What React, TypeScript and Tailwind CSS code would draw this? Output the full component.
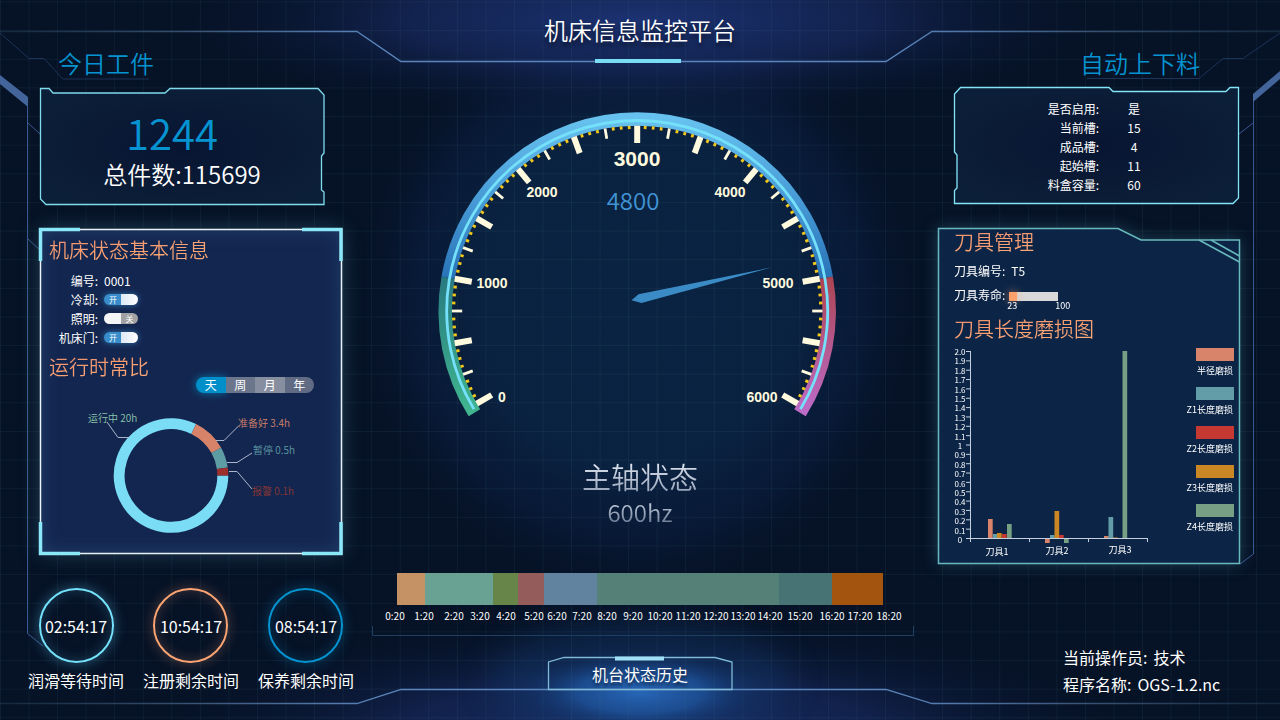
import { useState } from 'react'

const GRID_X = Array.from({ length: 45 }, (_, i) => i * 28.55 + 0.5)
const GRID_Y = Array.from({ length: 26 }, (_, i) => i * 28.63 + 2)

const feeder = [
  { label: '是否启用:', value: '是' },
  { label: '当前槽:', value: '15' },
  { label: '成品槽:', value: '4' },
  { label: '起始槽:', value: '11' },
  { label: '料盒容量:', value: '60' },
]

const timers = [
  { label: '润滑等待时间', time: '02:54:17', ring: 'border-[#74e2fb] shadow-[0_0_14px_rgba(90,200,240,0.4),inset_0_0_14px_rgba(90,200,240,0.22)]' },
  { label: '注册剩余时间', time: '10:54:17', ring: 'border-[#fda473] shadow-[0_0_14px_rgba(253,164,115,0.28),inset_0_0_14px_rgba(253,164,115,0.22)]' },
  { label: '保养剩余时间', time: '08:54:17', ring: 'border-[#0594d1] shadow-[0_0_14px_rgba(5,148,209,0.35),inset_0_0_14px_rgba(5,148,209,0.25)]' },
]

const periods = [
  { label: '天', tone: 'bg-[#667086]' },
  { label: '周', tone: 'bg-[#6b758b]' },
  { label: '月', tone: 'bg-[#868e9f]' },
  { label: '年', tone: 'bg-[#616c84]' },
]

const legend = [
  { label: '半径磨损', color: 'bg-[#d8846a]' },
  { label: 'Z1长度磨损', color: 'bg-[#629da8]' },
  { label: 'Z2长度磨损', color: 'bg-[#c63832]' },
  { label: 'Z3长度磨损', color: 'bg-[#cb8724]' },
  { label: 'Z4长度磨损', color: 'bg-[#779f83]' },
]

const CORAL = '#d8846a'
const TEAL = '#629da8'
const AMBER = '#cb8724'
const RED = '#c63832'
const GREEN = '#779f83'

// x, top, height, colour
const wearBars: [number, number, number, string][] = [
  [988, 519, 20, CORAL], [993, 534, 5, TEAL], [997, 533, 6, AMBER], [1002, 534, 5, RED], [1007, 524, 15, GREEN],
  [1045, 539, 4, CORAL], [1050, 535, 4, TEAL], [1054.5, 511, 28, AMBER], [1059, 535, 4, RED], [1064, 539, 4, GREEN],
  [1104, 536, 3, CORAL], [1108.5, 517, 22, TEAL], [1113, 537.5, 1.5, AMBER], [1118, 538, 1, RED], [1122.5, 351, 188, GREEN],
]

const wearAxis = ['2.0', '1.9', '1.8', '1.7', '1.6', '1.5', '1.4', '1.3', '1.2', '1.1', '1', '0.9', '0.8', '0.7', '0.6', '0.5', '0.4', '0.3', '0.2', '0.1', '0']

const history: [number, number, string][] = [
  [397, 425, '#c59265'], [425, 493, '#69a192'], [493, 518, '#678548'], [518, 544, '#945c5a'],
  [544, 597, '#61839f'], [597, 779, '#548077'], [779, 832, '#477374'], [832, 883, '#a3540f'],
]

const hours: [string, number][] = [
  ['0:20', 395], ['1:20', 424], ['2:20', 454], ['3:20', 480], ['4:20', 506], ['5:20', 534], ['6:20', 557],
  ['7:20', 582], ['8:20', 607], ['9:20', 633], ['10:20', 660], ['11:20', 688], ['12:20', 716],
  ['13:20', 743], ['14:20', 770], ['15:20', 800], ['16:20', 832], ['17:20', 860], ['18:20', 889],
]

const dialNumbers: [string, number, number, string][] = [
  ['0', 502, 402, 'text-sm'], ['1000', 492, 288, 'text-sm'], ['2000', 542, 197, 'text-sm'], ['3000', 637, 166, 'text-[21px]'],
  ['4000', 730, 197, 'text-sm'], ['5000', 778, 288, 'text-sm'], ['6000', 762, 402, 'text-sm'],
]

// angle in degrees, counter-clockwise from east
function polar(cx: number, cy: number, r: number, deg: number) {
  const a = (deg * Math.PI) / 180
  return [cx + r * Math.cos(a), cy - r * Math.sin(a)]
}

function arc(cx: number, cy: number, r: number, from: number, to: number) {
  const [x1, y1] = polar(cx, cy, r, from)
  const [x2, y2] = polar(cx, cy, r, to)
  return `M${x1} ${y1}A${r} ${r} 0 ${from - to > 180 ? 1 : 0} 1 ${x2} ${y2}`
}

function Backdrop() {
  return (
    <svg viewBox="0 0 1280 720" preserveAspectRatio="none" aria-hidden="true" className="absolute inset-0 h-full w-full">
      <defs>
        <radialGradient id="glow-dial">
          <stop offset="0" stopColor="#0a2342" />
          <stop offset="0.55" stopColor="#0a2342" stopOpacity="0.95" />
          <stop offset="0.8" stopColor="#091d3e" stopOpacity="0.6" />
          <stop offset="1" stopColor="#061226" stopOpacity="0" />
        </radialGradient>
        <radialGradient id="glow-edge">
          <stop offset="0" stopColor="#1c3272" />
          <stop offset="0.5" stopColor="#152759" stopOpacity="0.8" />
          <stop offset="1" stopColor="#0a1734" stopOpacity="0" />
        </radialGradient>
        <radialGradient id="glow-button">
          <stop offset="0" stopColor="#2767b8" />
          <stop offset="0.5" stopColor="#1f569f" stopOpacity="0.75" />
          <stop offset="1" stopColor="#0d2a5c" stopOpacity="0" />
        </radialGradient>
        <linearGradient id="edge-line">
          <stop offset="0" stopColor="#33506b" stopOpacity="0.35" />
          <stop offset="0.2" stopColor="#45648c" />
          <stop offset="0.3" stopColor="#5b86bd" />
          <stop offset="0.7" stopColor="#5b86bd" />
          <stop offset="0.8" stopColor="#45648c" />
          <stop offset="1" stopColor="#33506b" stopOpacity="0.35" />
        </linearGradient>
      </defs>
      <ellipse cx="637" cy="300" rx="290" ry="300" fill="url(#glow-dial)" />
      <ellipse cx="640" cy="20" rx="460" ry="95" fill="url(#glow-edge)" />
      <ellipse cx="640" cy="735" rx="480" ry="115" fill="url(#glow-edge)" opacity="0.9" />
      <ellipse cx="640" cy="678" rx="150" ry="60" fill="#16457f" fillOpacity="0.3" filter="blur(16px)" />
      <ellipse cx="640" cy="692" rx="125" ry="42" fill="url(#glow-button)" />
      <g stroke="#4f8c94" strokeOpacity="0.11">
        {GRID_X.map((x) => <line key={x} x1={x} y1="0" x2={x} y2="720" />)}
        {GRID_Y.map((y) => <line key={y} x1="0" y1={y} x2="1280" y2={y} />)}
      </g>
      <g fill="none" stroke="url(#edge-line)" strokeWidth="1.300">
        <path d="M0 31.5H357L401 61.5H886L932 31.5H1280" />
        <path d="M0 703.5H357L401 689.5H886L932 703.5H1280" />
      </g>
      <g fill="none" stroke="#1d3358">
        <path d="M0 33L29 58.500H44L63 79H149" />
        <path d="M1280 33L1243 58.500H1223L1199 78.500H1087" />
      </g>
      <g fill="none" stroke="#3a5890">
        <path d="M27.500 97V633.500L43 646" />
        <path d="M28 123L40 134M28 239L40 250" />
        <path d="M1253.500 94V554L1240 564M1239 134L1253 123" />
      </g>
      <path d="M0 75L28 97V107L0 84ZM1280 71L1253 94V102L1280 79Z" fill="#43659c" />
    </svg>
  )
}

function SectionTitle({ children }: { children: string }) {
  return (
    <h2 className="bg-linear-to-br from-[#f08f6c] via-[#fda574] to-[#ffb478] bg-clip-text text-xl leading-7 font-[350] text-transparent">
      {children}
    </h2>
  )
}

function TodayPanel() {
  return (
    <div className="relative mr-[18px] h-[117px] pt-[19px] text-center">
      <svg viewBox="0 0 284 117" preserveAspectRatio="none" aria-hidden="true" className="absolute inset-0 h-full w-full overflow-visible">
        <defs>
          <radialGradient id="today-fill" r="0.6">
            <stop offset="0" stopColor="#081532" />
            <stop offset="1" stopColor="#0c1f38" />
          </radialGradient>
        </defs>
        <path d="M0.500 0.500H9L13 5H125L130 0.500H278L284 7V65L281.500 68V102L284 104V116.500H6L0.500 111Z" fill="url(#today-fill)" stroke="#7fdcec" strokeWidth="1.300" />
      </svg>
      <p className="relative pr-5 text-[42px] leading-[50px] font-[350] text-[#0594d1]">1244</p>
      <p className="relative text-2xl leading-[34px] font-[350] text-white">总件数:115699</p>
    </div>
  )
}

function Toggle({ name, on }: { name: string; on: boolean }) {
  const [checked, setChecked] = useState(on)
  return (
    <label className={checked ? 'relative block h-[11px] w-[34px] cursor-pointer rounded-full shadow-[0_0_6px_rgba(58,142,205,0.7)]' : 'relative block h-[11px] w-[34px] cursor-pointer rounded-full'}>
      <input type="checkbox" aria-label={name} checked={checked} onChange={(e) => setChecked(e.target.checked)} className="sr-only" />
      <span className="flex h-full overflow-hidden rounded-full text-[8px] leading-[11px] text-white">
        {checked ? (
          <>
            <span className="w-1/2 bg-[#388dca] pl-px text-center">开</span>
            <span className="w-1/2 bg-linear-to-r from-[#dce9f4] to-white" />
          </>
        ) : (
          <>
            <span className="w-1/2 bg-[#f4f5f7]" />
            <span className="w-1/2 bg-[#a2a2a4] text-center">关</span>
          </>
        )}
      </span>
    </label>
  )
}

function PeriodPicker() {
  const [period, setPeriod] = useState('天')
  return (
    <fieldset className="mr-7 ml-auto flex h-4 w-[118px] rounded-full text-xs leading-4 text-white">
      {periods.map((p) => (
        <label
          key={p.label}
          className={`relative flex-1 cursor-pointer text-center first:rounded-l-full last:rounded-r-full ${period === p.label ? 'bg-[#008fc8] shadow-[0_0_8px_rgba(0,150,210,0.7)]' : p.tone}`}
        >
          <input type="radio" name="period" checked={period === p.label} onChange={() => setPeriod(p.label)} className="sr-only" />
          {p.label}
        </label>
      ))}
    </fieldset>
  )
}

function RuntimeDonut() {
  return (
    <svg viewBox="40 400 302 144" role="img" aria-label="运行时常比" className="block w-full">
      <g fill="none" strokeWidth="11">
        <path d={arc(171, 475.5, 51.8, 360, 64)} stroke="#7adcf5" />
        <path d={arc(171, 475.5, 51.8, 64, 29)} stroke="#d6836a" />
        <path d={arc(171, 475.5, 51.8, 29, 8)} stroke="#5f9da5" />
        <path d={arc(171, 475.5, 51.8, 8, 0)} stroke="#9b302d" />
      </g>
      <g fill="none" stroke="#aab6cc">
        <path d="M107 422L118 437.500H129M216 440.500H224L239 425.500M227 462.500H237L252 453M229 471.500H237L252 489" />
      </g>
      <g className="text-[10px] font-[350]">
        <text x="88" y="422" fill="#8cc5ac">运行中 20h</text>
        <text x="238" y="427" fill="#d6836a">准备好 3.4h</text>
        <text x="253" y="454" fill="#5f9da5">暂停 0.5h</text>
        <text x="252" y="495" fill="#8d3634">报警 0.1h</text>
      </g>
    </svg>
  )
}

function StatusRow({ label, children }: { label: string; children: React.ReactNode }) {
  return (
    <div className="flex h-[19px] items-center gap-[6px]">
      <dt className="w-[58px] text-right">{label}</dt>
      <dd>{children}</dd>
    </div>
  )
}

function MachinePanel() {
  return (
    <section className="relative mt-6 bg-[#13264f] pb-2.5 shadow-[0_0_20px_rgba(80,150,170,0.35),inset_0_0_20px_rgba(70,130,180,0.3)]">
      <svg viewBox="0 0 302 325" preserveAspectRatio="none" aria-hidden="true" className="absolute inset-0 h-full w-full overflow-visible">
        <rect x="0.500" y="0.500" width="301" height="324" fill="none" stroke="#e8f4f8" strokeWidth="1.500" />
        <path d="M0.500 32V0.500H40M262 0.500H301V32M301 293V324.500H262M40 324.500H0.500V293" fill="none" stroke="#8be8f8" strokeWidth="3.500" />
      </svg>
      <div className="relative">
        <div className="px-[9px] pt-[7px]">
          <SectionTitle>机床状态基本信息</SectionTitle>
        </div>
        <dl className="mt-[7px] text-xs leading-[19px] text-white">
          <StatusRow label="编号:">0001</StatusRow>
          <StatusRow label="冷却:"><Toggle name="冷却" on /></StatusRow>
          <StatusRow label="照明:"><Toggle name="照明" on={false} /></StatusRow>
          <StatusRow label="机床门:"><Toggle name="机床门" on /></StatusRow>
        </dl>
        <div className="px-[9px] pt-1.5">
          <SectionTitle>运行时常比</SectionTitle>
        </div>
        <div className="-mt-1">
          <PeriodPicker />
        </div>
        <div className="mt-[7px]">
          <RuntimeDonut />
        </div>
      </div>
    </section>
  )
}

function Timers() {
  return (
    <div className="-mr-3 -ml-3 mt-[34px] flex justify-between">
      {timers.map((t) => (
        <div key={t.label} className="flex flex-col items-center text-white">
          <div className={`flex h-[75px] w-[75px] items-center justify-center rounded-full border-2 ${t.ring}`}>
            <time className="pt-px text-base leading-6">{t.time}</time>
          </div>
          <p className="mt-[5px] text-base leading-6">{t.label}</p>
        </div>
      ))}
    </div>
  )
}

function Dial() {
  const ticks = Array.from({ length: 97 }, (_, i) => i)
  return (
    <svg viewBox="366 104 548 320" role="img" aria-label="主轴转速 4800" className="mt-[41px] block w-full">
      <defs>
        <linearGradient id="ring-green" x1="0" y1="0" x2="0" y2="1">
          <stop offset="0" stopColor="#28797f" />
          <stop offset="1" stopColor="#40b68f" />
        </linearGradient>
        <linearGradient id="ring-blue" x1="0" y1="0" x2="0" y2="1">
          <stop offset="0" stopColor="#66c1ee" />
          <stop offset="0.4" stopColor="#4ea3dc" />
          <stop offset="1" stopColor="#2974b8" />
        </linearGradient>
        <linearGradient id="ring-red" x1="0" y1="0" x2="0" y2="1">
          <stop offset="0" stopColor="#ac4552" />
          <stop offset="1" stopColor="#bd6bc8" />
        </linearGradient>
      </defs>
      <g fill="none" strokeWidth="13.500">
        <path d={arc(637.2, 311, 192, 212, 170)} stroke="url(#ring-green)" />
        <path d={arc(637.2, 311, 192, 170, 10)} stroke="url(#ring-blue)" />
        <path d={arc(637.2, 311, 192, 10, -32)} stroke="url(#ring-red)" />
      </g>
      <path d={arc(637.2, 311, 190.5, 211, -31)} fill="none" stroke="#74e0fa" strokeWidth="2.800" />
      {ticks.map((i) => {
        const deg = 210 - i * 2.5
        const major = i % 8 === 0
        const minor = i % 4 === 0
        const [x1, y1] = polar(637.2, 311, 185.3, deg)
        const [x2, y2] = polar(637.2, 311, major ? 168 : minor ? 175 : 182, deg)
        return <line key={i} x1={x1} y1={y1} x2={x2} y2={y2} stroke={minor ? '#fffade' : '#f2c81c'} strokeWidth={major ? 6 : 2.8} />
      })}
      <g fill="#fffade" textAnchor="middle" className="font-['Liberation_Sans',sans-serif] font-bold">
        {dialNumbers.map(([n, x, y, size]) => <text key={n} x={x} y={y} className={size}>{n}</text>)}
      </g>
      <text x="633" y="210" textAnchor="middle" fill="#4194d4" className="text-2xl font-[350]">4800</text>
      <path d="M631.500 300.300L638.500 294.300L772 267.300L641.500 303Z" fill="#3b8cc6" />
    </svg>
  )
}

function HistoryChart() {
  return (
    <svg viewBox="366 568 548 72" role="img" aria-label="机台状态历史" className="mt-10 block w-full overflow-visible">
      {history.map(([from, to, fill]) => <rect key={from} x={from} y="573" width={to - from} height="32" fill={fill} />)}
      <g fill="#fff" textAnchor="middle" className="text-[10px]">
        {hours.map(([h, x]) => <text key={h} x={x} y="620">{h}</text>)}
      </g>
      <path d="M372.500 626V635.500H913.500V626" fill="none" stroke="#1c3f62" />
    </svg>
  )
}

function FeederPanel() {
  return (
    <div className="relative ml-4 h-[117px] pt-3">
      <svg viewBox="0 0 286 117" preserveAspectRatio="none" aria-hidden="true" className="absolute inset-0 h-full w-full overflow-visible">
        <defs>
          <radialGradient id="feeder-fill" r="0.6">
            <stop offset="0" stopColor="#081532" />
            <stop offset="1" stopColor="#0c1f38" />
          </radialGradient>
        </defs>
        <path d="M6.500 0.500H155L159 4.500H272L276 0.500H284.500V111L279 116.500H0.500V103.500L3 101V68L0.500 65V7Z" fill="url(#feeder-fill)" stroke="#83e6f8" strokeWidth="1.300" />
      </svg>
      <dl className="relative text-xs leading-[19px] text-white">
        {feeder.map((f) => (
          <div key={f.label} className="flex">
            <dt className="w-[145px] text-right">{f.label}</dt>
            <dd className="ml-[23px] w-6 text-center">{f.value}</dd>
          </div>
        ))}
      </dl>
    </div>
  )
}

function WearChart() {
  return (
    <svg viewBox="950 344 210 214" role="img" aria-label="刀具长度磨损图" className="block w-[210px]">
      {wearBars.map(([x, y, h, fill]) => <rect key={x} x={x} y={y} width="4.700" height={h} fill={fill} />)}
      <g fill="none" stroke="#c5cfdd">
        <path d="M970.500 351V542M966 538.500H1148M1029.500 538V542M1088.500 538V542M1147.500 538V542" />
        {wearAxis.slice(0, -1).map((v, i) => <line key={v} x1="966" y1={351.5 + i * 9.35} x2="970" y2={351.5 + i * 9.35} />)}
      </g>
      <g fill="#fff" textAnchor="middle" className="text-[8px]">
        {wearAxis.map((v, i) => <text key={v} x="960" y={355 + i * 9.4}>{v}</text>)}
      </g>
      <g fill="#fff" textAnchor="middle" className="text-[9px]">
        <text x="997" y="555">刀具1</text>
        <text x="1057" y="554">刀具2</text>
        <text x="1120" y="553">刀具3</text>
      </g>
    </svg>
  )
}

function ToolPanel() {
  return (
    <section className="relative mt-6 drop-shadow-[0_0_8px_rgba(70,150,170,0.35)]">
      <svg viewBox="0 0 302 336" preserveAspectRatio="none" aria-hidden="true" className="absolute inset-0 h-full w-full overflow-visible">
        <g fill="none" stroke="#68b9bd" strokeWidth="1.500">
          <path d="M0.500 0.500H180L203 12H301.500V335.500H0.500Z" fill="#0c2547" />
          <path d="M261 12L301.500 34M273 12L301.500 28" />
        </g>
      </svg>
      <div className="relative pb-1.5 pl-4">
        <SectionTitle>刀具管理</SectionTitle>
        <dl className="text-xs text-white">
          <div className="flex gap-[6px] pt-[7px] leading-4">
            <dt>刀具编号:</dt>
            <dd>T5</dd>
          </div>
          <div className="mt-2 flex gap-1 leading-4">
            <dt>刀具寿命:</dt>
            <dd className="pt-[5px]">
              <div role="progressbar" aria-label="刀具寿命" aria-valuenow={23} aria-valuemin={0} aria-valuemax={100} className="h-[9px] w-[49px] bg-[#d9d9d9]">
                <div className="h-full w-2 bg-[#fda06c] shadow-[0_0_8px_rgba(253,160,108,0.6)]" />
              </div>
              <div className="-mr-3 -ml-0.5 flex justify-between text-[9px] leading-[10px]">
                <span>23</span>
                <span>100</span>
              </div>
            </dd>
          </div>
        </dl>
        <div className="mt-1">
          <SectionTitle>刀具长度磨损图</SectionTitle>
        </div>
        <div className="mt-px -ml-1 flex justify-between pr-1.5">
          <WearChart />
          <ul className="flex flex-col items-end gap-2.5 pt-1 text-[9px] leading-3 text-white">
            {legend.map((l) => (
              <li key={l.label} className="flex flex-col items-end gap-1">
                <span className={`h-[13px] w-[38px] ${l.color}`} />
                <span className="pr-px">{l.label}</span>
              </li>
            ))}
          </ul>
        </div>
      </div>
    </section>
  )
}

export default function App() {
  return (
    <div className="relative min-h-screen overflow-hidden bg-[#061226] font-['Noto_Sans_CJK_SC',sans-serif]">
      <Backdrop />
      <main className="relative grid grid-cols-[366px_1fr_366px]">
        <div className="pt-[47px] pr-6 pl-10">
          <h2 className="mb-[9px] pl-[18px] text-2xl leading-8 font-[350] text-[#0594d1]">今日工件</h2>
          <TodayPanel />
          <MachinePanel />
          <Timers />
        </div>

        <div className="flex flex-col items-center">
          <h1 className="mt-[14px] text-2xl leading-8 font-[350] text-white [text-shadow:0_4px_4px_rgba(0,0,0,0.5)]">机床信息监控平台</h1>
          <div className="mt-[13px] mr-1 h-1 w-[86px] bg-[#7bdcf6]" />
          <Dial />
          <h2 className="mt-8 bg-linear-to-b from-[#f0f4fa] to-[#8f9db5] bg-clip-text text-[29px] leading-10 font-[350] text-transparent">主轴状态</h2>
          <p className="bg-linear-to-b from-[#e2e9f2] to-[#5a6c88] bg-clip-text text-2xl leading-8 font-[350] text-transparent">600hz</p>
          <HistoryChart />
          <button type="button" className="relative mt-[17px] h-[33px] w-[184px] cursor-pointer text-base leading-6 text-white [text-shadow:0_3px_3px_rgba(0,0,0,0.5)]">
            <svg viewBox="0 0 184 33" preserveAspectRatio="none" aria-hidden="true" className="absolute inset-0 h-full w-full overflow-visible">
              <path d="M0.500 32.500V5L16 0.500H167L184 5V32.500Z" fill="none" stroke="#7fb9d8" strokeWidth="1.300" />
              <path d="M67 1.500H116" stroke="#9fe0f5" strokeWidth="4" />
            </svg>
            <span className="relative">机台状态历史</span>
          </button>
        </div>

        <div className="pt-[47px] pr-10 pl-6">
          <h2 className="mb-2 pr-10 text-right text-2xl leading-8 font-[350] text-[#0594d1]">自动上下料</h2>
          <FeederPanel />
          <ToolPanel />
          <dl className="mt-20 pl-[125px] text-base leading-[27px] text-white">
            <div className="flex gap-1.5">
              <dt>当前操作员:</dt>
              <dd>技术</dd>
            </div>
            <div className="flex gap-1.5">
              <dt>程序名称:</dt>
              <dd>OGS-1.2.nc</dd>
            </div>
          </dl>
        </div>
      </main>
    </div>
  )
}
